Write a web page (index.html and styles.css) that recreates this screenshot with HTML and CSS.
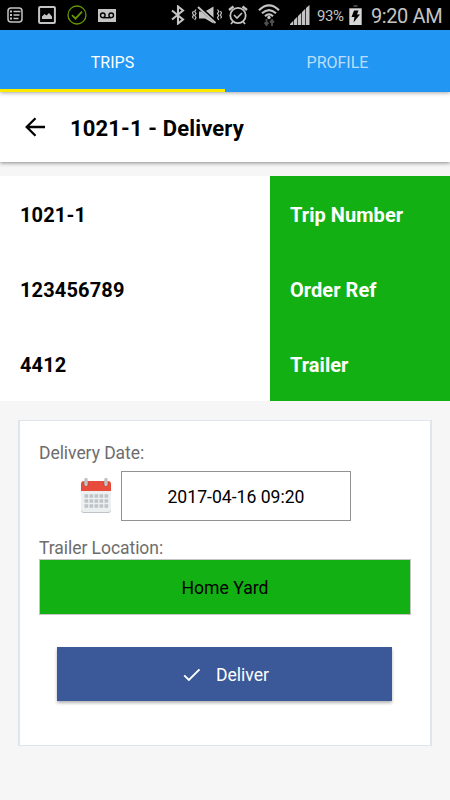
FILE: index.html
```html
<!DOCTYPE html>
<html lang="en">
<head>
    <meta charset="UTF-8">
    <meta name="viewport" content="width=device-width, initial-scale=1">
    <title>1021-1 - Delivery</title>
    <link rel="stylesheet" href="styles.css">
</head>
<body>

    <div class="statusbar">
        <div class="status-left">
            <svg class="icon-list" width="16" height="16" viewBox="0 0 16 16" fill="none" stroke="#c4c4c4">
                <rect x="1" y="1" width="14" height="14" rx="3" stroke-width="1.5"/>
                <path d="M3 4.5h2M3 8h2M3 11.5h2" stroke-width="2"/>
                <path d="M6.5 4.5h7M6.5 8h6M6.5 11.5h5" stroke-width="1.6"/>
            </svg>
            <svg class="icon-image" width="18" height="18" viewBox="0 0 18 18">
                <rect x="1.1" y="1.1" width="15.8" height="15.8" rx="1" fill="none" stroke="#c4c4c4" stroke-width="2"/>
                <path d="M4 13v-2.500l2.500-2.500 2 1.500 2.500-2.500L14 10.500V13z" fill="#c4c4c4"/>
            </svg>
            <svg class="icon-check" width="20" height="20" viewBox="0 0 20 20" fill="none" stroke="#669800">
                <circle cx="10" cy="10" r="9" stroke-width="1.3"/>
                <path d="M5 10.200l3.500 3.500 6.500-7" stroke-width="1.8"/>
            </svg>
            <svg class="icon-voicemail" width="18" height="13" viewBox="0 0 18 13">
                <path d="M0 0h18v13H0z" fill="#c4c4c4"/>
                <g fill="none" stroke="#000" stroke-width="1.4">
                    <circle cx="4.800" cy="6.300" r="2.300"/>
                    <circle cx="13.200" cy="6.300" r="2.300"/>
                    <path d="M4.800 8.700h8.400"/>
                </g>
            </svg>
        </div>
        <div class="status-right">
            <svg class="icon-bluetooth" width="14" height="20" viewBox="0 0 14 20" fill="none" stroke="#c4c4c4" stroke-width="2.100">
                <path d="M1 5.500l11 9-5 4V1.500l5 4-11 9"/>
            </svg>
            <svg class="icon-mute" width="30" height="18" viewBox="0 0 30 18">
                <path d="M7 5.500h6l8.500-5v17L13 12.500H7z" fill="#c4c4c4"/>
                <path d="M7 1l18 16" stroke="#000" stroke-width="3.500"/>
                <path d="M6 1l17.500 16" stroke="#c4c4c4" stroke-width="1.900"/>
                <path d="M4 3.500l-1.300 2 1.300 2-1.300 2 1.300 2-1.300 2.500M1.500 5l-1 2 1 2-1 2 1 1.500M25.500 3.500l1.300 2-1.300 2 1.300 2-1.300 2 1.300 2.500M28.500 5l1 2-1 2 1 2-1 1.500" fill="none" stroke="#c4c4c4" stroke-width="1.200"/>
            </svg>
            <svg class="icon-alarm" width="20" height="20" viewBox="0 0 20 20" fill="none" stroke="#c4c4c4">
                <circle cx="10" cy="10.500" r="7.700" stroke-width="1.800"/>
                <path d="M6 10l3 3 5-5" stroke-width="1.600"/>
                <path d="M1 5l4.500-3.500M19 5l-4.500-3.500" stroke-width="2.300"/>
                <path d="M5 16.500l-2 2.500M15 16.500l2 2.500" stroke-width="1.700"/>
            </svg>
            <svg class="icon-wifi" width="22" height="23" viewBox="0 0 22 23" fill="none">
                <path d="M1 6.200q10-9.500 20 0M4 9.300q7-6.500 14 0M7 12.200q4-3.600 8 0" stroke="#c4c4c4" stroke-width="2.200"/>
                <circle cx="11" cy="13.500" r="1.700" fill="#c4c4c4"/>
                <path d="M8.500 15v6M6.500 18.500l2 2.500 2-2.500M14 22v-6M12 18.500l2-2.500 2 2.500" stroke="#505050" stroke-width="1.800"/>
            </svg>
            <svg class="icon-signal" width="20" height="20" viewBox="0 0 20 20" fill="#c4c4c4">
                <path d="M0 20v-1l3.300-3.300V20zM4 20v-5l3.300-3.300V20zM8 20v-9l3.300-3.300V20zM12 20V7l3.300-3.300V20zM16 20V3l3.500-3v20z"/>
            </svg>
            <span class="battery-level">93%</span>
            <svg class="icon-battery" width="13" height="20" viewBox="0 0 13 20">
                <path d="M4.500 0h4v2h-4z" fill="#444"/>
                <path d="M.3 3.300h12.400V20H.3z" fill="#d8d8d8"/>
                <path d="M5 5.500h4.500L8 9.500h3L4.500 17.500l1-5.500H2.500z" fill="#000"/>
            </svg>
            <span class="clock">9:20 AM</span>
        </div>
    </div>

    <div class="tabs">
        <div class="tab active">TRIPS</div>
        <div class="tab">PROFILE</div>
    </div>

    <div class="header">
        <svg class="back" width="20" height="20" viewBox="0 0 20 20" fill="none" stroke="#000" stroke-width="2.300">
            <path d="M10.500 1.300L1.700 10l8.800 8.700M1.700 10H20"/>
        </svg>
        <h1>1021-1 - Delivery</h1>
    </div>

    <div class="details">
        <div class="row">
            <div class="value">1021-1</div>
            <div class="label">Trip Number</div>
        </div>
        <div class="row">
            <div class="value">123456789</div>
            <div class="label">Order Ref</div>
        </div>
        <div class="row">
            <div class="value">4412</div>
            <div class="label">Trailer</div>
        </div>
    </div>

    <div class="card">
        <div class="field-label">Delivery Date:</div>
        <div class="date-row">
            <svg class="calendar" width="32" height="36" viewBox="0 0 32 36">
                <path d="M1 13h30v20a3 3 0 0 1-3 3H4a3 3 0 0 1-3-3z" fill="#bdc3c7"/>
                <path d="M1 13h30v19a3 3 0 0 1-3 3H4a3 3 0 0 1-3-3z" fill="#ecf0f1"/>
                <path d="M1 14V7a3 3 0 0 1 3-3h24a3 3 0 0 1 3 3v7z" fill="#e74c3c"/>
                <circle cx="6" cy="7" r="2.500" fill="#c0392b"/>
                <circle cx="26" cy="7" r="2.500" fill="#c0392b"/>
                <path d="M6 2.500v5M26 2.500v5" stroke="#bdc3c7" stroke-width="3.500" stroke-linecap="round"/>
                <path d="M4.500 19h24M4.500 24h24M4.500 29h24" stroke="#bdc3c7" stroke-width="3.700" stroke-dasharray="3.700 1.300"/>
            </svg>
            <div class="date-input">2017-04-16 09:20</div>
        </div>
        <div class="field-label">Trailer Location:</div>
        <div class="location">Home Yard</div>
        <div class="deliver-button">
            <svg width="18" height="14" viewBox="0 0 18 14" fill="none" stroke="#fff" stroke-width="1.900">
                <path d="M1.200 7.300l4.700 4.700L16.500 1.300"/>
            </svg>
            <span>Deliver</span>
        </div>
    </div>

</body>
</html>
```

FILE: styles.css
```css
* {
    box-sizing: border-box;
}

body {
    margin: 0;
    min-height: 100vh;
    background-color: #f6f6f6;
    font-family: Roboto, Arial, sans-serif;
    font-size: 17.6px;
    color: #000;
}

svg {
    display: block;
    flex-shrink: 0;
}

/* Status bar */
.statusbar {
    display: flex;
    justify-content: space-between;
    height: 30px;
    padding: 0 7px;
    background-color: #000;
    color: #c4c4c4;
}

.status-left,
.status-right {
    display: flex;
    align-items: center;
}

.icon-image {
    margin-left: 15px;
}

.icon-check {
    margin-left: 11px;
}

.icon-voicemail {
    margin-left: 11px;
}

.icon-mute {
    margin-left: 7px;
}

.icon-alarm {
    margin-left: 6px;
}

.icon-wifi {
    margin-left: 10px;
}

.icon-signal {
    margin-left: 10px;
    margin-bottom: 1px;
}

.battery-level {
    width: 28px;
    margin-left: 7px;
    font-size: 15px;
    letter-spacing: -0.4px;
    padding-top: 2px;
}

.icon-battery {
    margin-left: 4px;
}

.clock {
    width: 72px;
    margin-left: 9px;
    font-size: 20px;
    letter-spacing: -0.4px;
    white-space: nowrap;
    padding-top: 1px;
}

/* Tabs */
.tabs {
    display: flex;
    height: 62px;
    background-color: #2196f3;
    position: relative;
    z-index: 2;
    box-shadow: 0 1px 4px rgba(0, 0, 0, 0.35);
}

.tab {
    flex: 1;
    padding-top: 3px;
    border-bottom: 3px solid #2196f3;
    font-size: 16px;
    line-height: 59px;
    text-align: center;
    color: rgba(255, 255, 255, 0.7);
}

.tab.active {
    border-bottom-color: #ffeb00;
    color: #fff;
}

/* Header */
.header {
    display: flex;
    align-items: center;
    height: 70px;
    padding: 0 25px;
    background-color: #fff;
    position: relative;
    box-shadow: 0 1px 4px rgba(0, 0, 0, 0.45);
}

.header h1 {
    margin: 3px 0 0 25px;
    font-size: 22px;
    font-weight: bold;
    letter-spacing: 0.15px;
}

/* Trip details */
.details {
    margin-top: 14px;
}

.row {
    display: flex;
    height: 75px;
    font-size: 20px;
    font-weight: bold;
    line-height: 78px;
}

.value {
    width: 60%;
    padding-left: 20px;
    background-color: #fff;
    letter-spacing: 0.15px;
}

.label {
    width: 40%;
    padding-left: 20px;
    background-color: #12b012;
    color: #fff;
    letter-spacing: 0.05px;
}

/* Delivery card */
.card {
    height: 326px;
    margin: 19px 18px 0;
    padding: 21px 19px 0;
    border: solid #dfe5ea;
    border-width: 1px 2px;
    background-color: #fff;
}

.field-label {
    height: 22px;
    line-height: 22px;
    font-size: 17.5px;
    letter-spacing: -0.05px;
    color: #6d6d6d;
}

.date-row {
    display: flex;
    height: 50px;
    margin: 7px 0 16px 41px;
}

.calendar {
    margin-top: 6px;
}

.date-input {
    width: 230px;
    margin-left: 9px;
    border: 1px solid #929292;
    line-height: 50px;
    text-align: center;
}

.location {
    height: 56px;
    border: 1px solid #c4c4c4;
    background-color: #12b012;
    line-height: 56px;
    text-align: center;
}

.deliver-button {
    display: flex;
    justify-content: center;
    align-items: center;
    gap: 15px;
    width: 335px;
    height: 54px;
    margin: 32px auto 0 18px;
    padding: 2px 0 0 3px;
    background-color: #3b5998;
    color: #fff;
    box-shadow: 0 2px 3px rgba(0, 0, 0, 0.3);
}
```
